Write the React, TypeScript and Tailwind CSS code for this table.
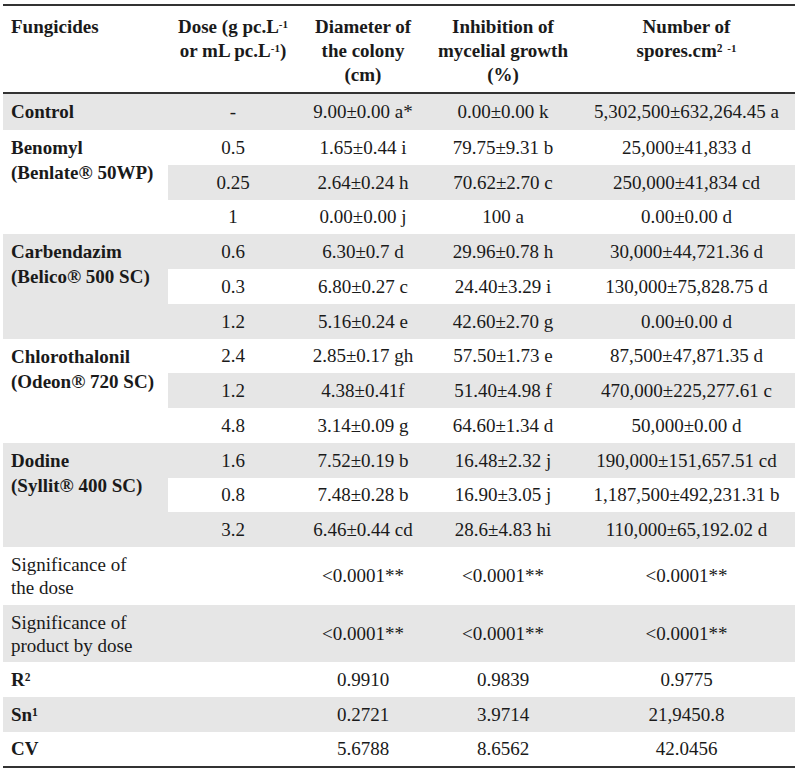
type Row = {
  dose: string;
  diameter: string;
  inhibition: string;
  spores: string;
  gray: boolean;
  h: string;
};

type Group = { name: string; sub: string; rows: Row[] };

const groups: Group[] = [
  {
    name: "Benomyl",
    sub: "(Benlate® 50WP)",
    rows: [
      { dose: "0.5", diameter: "1.65±0.44 i", inhibition: "79.75±9.31 b", spores: "25,000±41,833 d", gray: false, h: "h-[35px]" },
      { dose: "0.25", diameter: "2.64±0.24 h", inhibition: "70.62±2.70 c", spores: "250,000±41,834 cd", gray: true, h: "h-[35px]" },
      { dose: "1", diameter: "0.00±0.00 j", inhibition: "100 a", spores: "0.00±0.00 d", gray: false, h: "h-[34px]" },
    ],
  },
  {
    name: "Carbendazim",
    sub: "(Belico® 500 SC)",
    rows: [
      { dose: "0.6", diameter: "6.30±0.7 d", inhibition: "29.96±0.78 h", spores: "30,000±44,721.36 d", gray: true, h: "h-[35px]" },
      { dose: "0.3", diameter: "6.80±0.27 c", inhibition: "24.40±3.29 i", spores: "130,000±75,828.75 d", gray: false, h: "h-[35px]" },
      { dose: "1.2", diameter: "5.16±0.24 e", inhibition: "42.60±2.70 g", spores: "0.00±0.00 d", gray: true, h: "h-[35px]" },
    ],
  },
  {
    name: "Chlorothalonil",
    sub: "(Odeon® 720 SC)",
    rows: [
      { dose: "2.4", diameter: "2.85±0.17 gh", inhibition: "57.50±1.73 e", spores: "87,500±47,871.35 d", gray: false, h: "h-[34px]" },
      { dose: "1.2", diameter: "4.38±0.41f", inhibition: "51.40±4.98 f", spores: "470,000±225,277.61 c", gray: true, h: "h-[35px]" },
      { dose: "4.8", diameter: "3.14±0.09 g", inhibition: "64.60±1.34 d", spores: "50,000±0.00 d", gray: false, h: "h-[35px]" },
    ],
  },
  {
    name: "Dodine",
    sub: "(Syllit® 400 SC)",
    rows: [
      { dose: "1.6", diameter: "7.52±0.19 b", inhibition: "16.48±2.32 j", spores: "190,000±151,657.51 cd", gray: true, h: "h-[35px]" },
      { dose: "0.8", diameter: "7.48±0.28 b", inhibition: "16.90±3.05 j", spores: "1,187,500±492,231.31 b", gray: false, h: "h-[34px]" },
      { dose: "3.2", diameter: "6.46±0.44 cd", inhibition: "28.6±4.83 hi", spores: "110,000±65,192.02 d", gray: true, h: "h-[35px]" },
    ],
  },
];

const stats = [
  { label: "R²", values: ["0.9910", "0.9839", "0.9775"], gray: false, h: "h-[35px]" },
  { label: "Sn¹", values: ["0.2721", "3.9714", "21,9450.8"], gray: true, h: "h-[35px]" },
  { label: "CV", values: ["5.6788", "8.6562", "42.0456"], gray: false, h: "h-[36px]" },
];

const line = "border-[#333]";

export default function App() {
  return (
    <div className="min-h-[775px] w-[799px] bg-white pl-[3px] pt-[4px] font-['Liberation_Serif','Times_New_Roman',serif] text-[19px] leading-[24px] text-[#1a1a1a]">
      <table className="w-[792px] table-fixed border-separate border-spacing-0">
        <colgroup>
          <col className="w-[165px]" />
          <col className="w-[130px]" />
          <col className="w-[130px]" />
          <col className="w-[150px]" />
          <col className="w-[217px]" />
        </colgroup>
        <thead>
          <tr className="h-[90px] font-bold">
            <th className={`border-y-2 ${line} pl-[8px] pt-[9px] text-left align-top`}>Fungicides</th>
            <th className={`border-y-2 ${line} pt-[9px] text-center align-top`}>
              Dose (g pc.L<sup className="text-[11px]">-1</sup>
              <br />
              or mL pc.L<sup className="text-[11px]">-1</sup>)
            </th>
            <th className={`border-y-2 ${line} pt-[9px] text-center align-top`}>
              Diameter of
              <br />
              the colony
              <br />
              (cm)
            </th>
            <th className={`border-y-2 ${line} pt-[9px] text-center align-top`}>
              Inhibition of
              <br />
              mycelial growth
              <br />
              (%)
            </th>
            <th className={`border-y-2 ${line} pt-[9px] text-center align-top`}>
              Number of
              <br />
              spores.cm² <sup className="text-[11px]">-1</sup>
            </th>
          </tr>
        </thead>
        <tbody>
          <tr className="h-[36px] bg-[#e6e6e6] text-center">
            <td className="pl-[8px] text-left font-bold">Control</td>
            <td>-</td>
            <td>9.00±0.00 a*</td>
            <td>0.00±0.00 k</td>
            <td>5,302,500±632,264.45 a</td>
          </tr>
          {groups.map((g) =>
            g.rows.map((r, i) => (
              <tr key={g.name + r.dose + i} className={`${r.h} text-center ${r.gray ? "bg-[#e6e6e6]" : ""}`}>
                {i === 0 && (
                  <td rowSpan={3} className="pl-[8px] pt-[5px] text-left align-top font-bold leading-[25px]">
                    {g.name}
                    <br />
                    {g.sub}
                  </td>
                )}
                <td>{r.dose}</td>
                <td>{r.diameter}</td>
                <td>{r.inhibition}</td>
                <td>{r.spores}</td>
              </tr>
            )),
          )}
          <tr className="h-[58px] text-center">
            <td className="pl-[8px] text-left leading-[23px]">
              Significance of
              <br />
              the dose
            </td>
            <td></td>
            <td>&lt;0.0001**</td>
            <td>&lt;0.0001**</td>
            <td>&lt;0.0001**</td>
          </tr>
          <tr className="h-[57px] bg-[#e6e6e6] text-center">
            <td className="pl-[8px] text-left leading-[23px]">
              Significance of
              <br />
              product by dose
            </td>
            <td></td>
            <td>&lt;0.0001**</td>
            <td>&lt;0.0001**</td>
            <td>&lt;0.0001**</td>
          </tr>
          {stats.map((s, i) => {
            const last = i === stats.length - 1 ? `border-b-2 ${line}` : "";
            return (
              <tr key={s.label} className={`${s.h} text-center ${s.gray ? "bg-[#e6e6e6]" : ""}`}>
                <td className={`pl-[8px] text-left font-bold ${last}`}>{s.label}</td>
                <td className={last}></td>
                {s.values.map((v) => (
                  <td key={v} className={last}>
                    {v}
                  </td>
                ))}
              </tr>
            );
          })}
        </tbody>
      </table>
    </div>
  );
}
